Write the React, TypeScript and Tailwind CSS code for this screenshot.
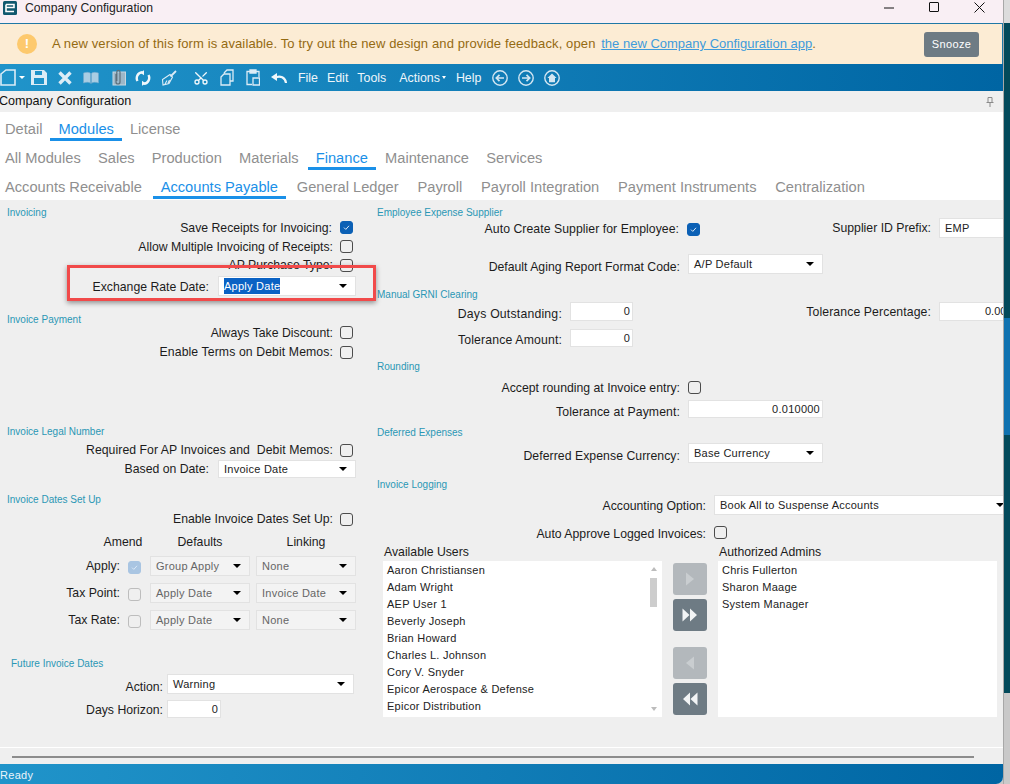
import type { ReactNode } from "react";
import { Scissors } from "lucide-react";

const users = [
  "Aaron Christiansen",
  "Adam Wright",
  "AEP User 1",
  "Beverly Joseph",
  "Brian Howard",
  "Charles L. Johnson",
  "Cory V. Snyder",
  "Epicor Aerospace & Defense",
  "Epicor Distribution",
];
const admins = ["Chris Fullerton", "Sharon Maage", "System Manager"];

function SectionTitle({ children, className = "" }: { children: ReactNode; className?: string }) {
  return <div className={`h-[12px] pt-[1px] text-[10px] leading-[12px] text-[#2a97b5] whitespace-nowrap ${className}`}>{children}</div>;
}

function Label({ children, className = "" }: { children: ReactNode; className?: string }) {
  return <div className={`shrink-0 text-right text-[12.25px] leading-[16px] text-[#1c1c1c] whitespace-nowrap ${className}`}>{children}</div>;
}

function Check({ checked, disabled, className = "" }: { checked?: boolean; disabled?: boolean; className?: string }) {
  const tone = checked
    ? disabled
      ? "bg-[#a9c5e2] border-[#a9c5e2]"
      : "bg-[#0b60b5] border-[#0b60b5]"
    : disabled
      ? "border-[#bdbdbd]"
      : "border-[#4c4c4c]";
  return (
    <div className={`flex h-[13px] w-[13px] shrink-0 items-center justify-center rounded-[3px] border ${tone} ${className}`}>
      {checked && (
        <svg width="9" height="9" viewBox="0 0 9 9" fill="none">
          <path d="M2 4.6 3.8 6.4 7 2.8" stroke="#dbe9f7" strokeWidth="1" />
        </svg>
      )}
    </div>
  );
}

function Select({
  value,
  disabled,
  selected,
  className = "",
}: {
  value: string;
  disabled?: boolean;
  selected?: boolean;
  className?: string;
}) {
  return (
    <div
      className={`flex shrink-0 items-center justify-between border border-[#e2e2e2] pl-[5px] pr-[8px] text-[11px] tracking-[0.25px] whitespace-nowrap ${
        disabled ? "bg-[#f3f3f3] text-[#666666]" : "bg-white text-[#222222]"
      } ${className}`}
    >
      {selected ? <span className="bg-[#0a62c4] text-white">{value}</span> : <span>{value}</span>}
      <div className="h-0 w-0 border-x-[4px] border-t-[4px] border-x-transparent border-t-black" />
    </div>
  );
}

function NumberBox({ value, className = "" }: { value: string; className?: string }) {
  return (
    <div className={`flex shrink-0 items-center justify-end border border-[#e2e2e2] bg-white pr-[2px] text-[11px] tracking-[0.25px] text-[#222222] ${className}`}>
      {value}
    </div>
  );
}

function Tabs({ items, active, className = "" }: { items: string[]; active: string; className?: string }) {
  return (
    <div className={`flex h-[29px] -ml-[3px] ${className}`}>
      {items.map((t) => (
        <div
          key={t}
          className={`h-[29px] whitespace-nowrap border-b-[3px] px-[8px] pt-[8px] text-[14.67px] leading-[18px] ${
            t === active ? "border-[#1a90e8] text-[#1a90e8]" : "border-transparent text-[#8f8f8f]"
          }`}
        >
          {t}
        </div>
      ))}
    </div>
  );
}

function MoveButton({ dim, className = "", dir, double }: { dim?: boolean; className?: string; dir: "left" | "right"; double?: boolean }) {
  const d = dir === "right" ? (double ? "M1.5 2.5l7 6.5-7 6.5zM9 2.5l7 6.5-7 6.5z" : "M5 2.5l8 6.5-8 6.5z") : double ? "M16.5 2.5l-7 6.5 7 6.5zM9 2.5L2 9l7 6.5z" : "M13 2.5L5 9l8 6.5z";
  return (
    <div className={`flex h-[32px] w-[34px] items-center justify-center rounded-[3px] ${dim ? "bg-[#b3b8bc]" : "bg-[#6e7b84]"} ${className}`}>
      <svg width="18" height="18" viewBox="0 0 18 18" fill={dim ? "#c9cdd0" : "#f2f4f5"}>
        <path d={d} />
      </svg>
    </div>
  );
}

function CircleIcon({ children, className = "" }: { children: ReactNode; className?: string }) {
  return (
    <svg width="16" height="16" viewBox="0 0 16 16" fill="none" stroke="#d3e6f2" strokeWidth="1.4" className={className}>
      <circle cx="8" cy="8" r="7.2" />
      {children}
    </svg>
  );
}

function Toolbar() {
  const c = "#dcecf6";
  return (
    <div className="flex h-[27px] items-center bg-gradient-to-r from-[#2094ca] to-[#0065a3] text-[12.4px] text-[#eef6fb]">
      <svg width="17" height="17" viewBox="0 0 17 17" fill="none" stroke={c} strokeWidth="1.6">
        <path d="M1 5 6 1h9v15H1z" />
      </svg>
      <div className="ml-[2px] h-0 w-0 border-x-[3px] border-t-[3px] border-x-transparent border-t-white" />
      <svg width="16" height="15" viewBox="0 0 16 15" className="ml-[6px]">
        <path fillRule="evenodd" fill={c} d="M0 0h13l3 3v12H0zM4 1v4h7V1zM3 8v6h10V8z" />
      </svg>
      <svg width="14" height="14" viewBox="0 0 14 14" stroke={c} strokeWidth="3.4" className="ml-[11px]">
        <path d="M1.5 1.5l11 11M12.5 1.5l-11 11" />
      </svg>
      <svg width="16" height="13" viewBox="0 0 16 13" className="ml-[11px]" fill="#a9cde3" stroke="#6fa8cc" strokeWidth="0.6">
        <path d="M0.5 2C3 1 6 1 7.6 2.4V12.4C6 11 3 11 0.5 12zM15.5 2C13 1 10 1 8.4 2.4V12.4C10 11 13 11 15.5 12z" />
      </svg>
      <svg width="16" height="17" viewBox="0 0 16 17" className="ml-[11px]" fill="none">
        <rect x="3" y="3" width="12.5" height="13" fill="#9db7c8" stroke="#c7d6df" />
        <path d="M6 5V13a2 2 0 0 0 4 0V3a1.6 1.6 0 0 0-3.2 0V12" stroke="#5d6f7b" strokeWidth="1.2" />
      </svg>
      <svg width="16" height="16" viewBox="0 0 16 16" fill="none" stroke="#f0f7fb" strokeWidth="2.4" className="ml-[9px]">
        <path d="M2.5 11A6 6 0 0 1 7 2.2M13.5 5A6 6 0 0 1 9 13.8" />
        <path d="M9 .2v5L5 2.4zM7 15.8v-5l4 2.8z" fill="#f0f7fb" stroke="none" />
      </svg>
      <svg width="16" height="16" viewBox="0 0 16 16" fill="none" stroke={c} strokeWidth="1.1" className="ml-[10px]">
        <path d="M15 1 9.5 6.5" strokeWidth="1.8" />
        <path d="M9 4.5 11.5 7 8 13.5 2 15 1.5 9.5zM4 14l2-3.5M7 13l1.5-3" />
      </svg>
      <Scissors size={16} color="#f0f7fb" strokeWidth={2} className="ml-[16px] -rotate-90" />
      <svg width="14" height="17" viewBox="0 0 14 17" fill="none" stroke={c} strokeWidth="1.3" className="ml-[11px]">
        <path d="M4 4 7 1h6v11h-3M1 8l3-3h6v11H1z" />
      </svg>
      <svg width="14" height="17" viewBox="0 0 14 17" fill="none" stroke={c} strokeWidth="1.3" className="ml-[12px]">
        <path d="M4 2.5H1v13h5M10 2.5h3V8" />
        <path d="M4 1h6v3H4z" fill={c} />
        <path d="M7 9h6.5v7H7z" />
      </svg>
      <svg width="16" height="11" viewBox="0 0 16 11" fill="none" stroke="#f0f7fb" strokeWidth="2.2" className="ml-[11px]">
        <path d="M15 11C14.5 6 9 2.5 4 6" />
        <path d="M0 5 6 1v8z" fill="#f0f7fb" stroke="none" />
      </svg>
      <span className="ml-[11px] pt-[2px]">File</span>
      <span className="ml-[9px] pt-[2px]">Edit</span>
      <span className="ml-[9px] pt-[2px]">Tools</span>
      <span className="ml-[13px] pt-[2px]">Actions</span>
      <div className="ml-[2px] h-0 w-0 border-x-[2.5px] border-t-[3px] border-x-transparent border-t-white" />
      <span className="ml-[10px] pt-[2px]">Help</span>
      <CircleIcon className="ml-[11px]">
        <path d="M12 8H4.5M7.5 4.8 4.3 8l3.2 3.2" strokeWidth="1.7" />
      </CircleIcon>
      <CircleIcon className="ml-[10px]">
        <path d="M4 8h7.5M8.5 4.8 11.7 8l-3.2 3.2" strokeWidth="1.7" />
      </CircleIcon>
      <CircleIcon className="ml-[10px]">
        <path d="M8 3.4 3.4 8H5v4.2h6V8h1.6z" fill="#d3e6f2" stroke="none" />
      </CircleIcon>
    </div>
  );
}

function LeftColumn() {
  return (
    <div className="relative w-[370px] shrink-0 pt-[6px]">
      <SectionTitle className="pl-[7px]">Invoicing</SectionTitle>
      <div className="mt-[2px] flex h-[16px] items-center">
        <Label className="w-[332px]">Save Receipts for Invoicing:</Label>
        <Check checked className="ml-[8px] -mt-[2px]" />
      </div>
      <div className="mt-[3px] flex h-[16px] items-center">
        <Label className="w-[333px]">Allow Multiple Invoicing of Receipts:</Label>
        <Check className="ml-[7px] -mt-[2px]" />
      </div>
      <div className="mt-[2px] flex h-[16px] items-center">
        <Label className="w-[333px]">AP Purchase Type:</Label>
        <Check className="ml-[7px]" />
      </div>
      <div className="mt-[3px] flex h-[20px] items-center">
        <Label className="w-[209px] pt-[1px]">Exchange Rate Date:</Label>
        <Select value="Apply Date" selected className="ml-[9px] h-[20px] w-[138px]" />
      </div>

      <SectionTitle className="mt-[17px] pl-[7px]">Invoice Payment</SectionTitle>
      <div className="flex h-[16px] items-center">
        <Label className="w-[333px]">Always Take Discount:</Label>
        <Check className="ml-[7px] -mt-[2px]" />
      </div>
      <div className="mt-[3px] flex h-[16px] items-center">
        <Label className="w-[333px] tracking-[0.1px]">Enable Terms on Debit Memos:</Label>
        <Check className="ml-[7px]" />
      </div>

      <SectionTitle className="mt-[65px] pl-[7px]">Invoice Legal Number</SectionTitle>
      <div className="mt-[5px] flex h-[16px] items-center">
        <Label className="w-[333px] tracking-[0.05px]">Required For AP Invoices and&nbsp; Debit Memos:</Label>
        <Check className="ml-[7px]" />
      </div>
      <div className="mt-[2px] flex h-[18px] items-center">
        <Label className="w-[209px]">Based on Date:</Label>
        <Select value="Invoice Date" className="ml-[9px] h-[18px] w-[138px]" />
      </div>

      <SectionTitle className="mt-[15px] pl-[7px]">Invoice Dates Set Up</SectionTitle>
      <div className="mt-[6px] flex h-[16px] items-center">
        <Label className="w-[333px]">Enable Invoice Dates Set Up:</Label>
        <Check className="ml-[7px]" />
      </div>
      <div className="mt-[7px] flex h-[16px] items-center text-center text-[12.25px] leading-[16px] text-[#1c1c1c]">
        <div className="ml-[100px] w-[46px]">Amend</div>
        <div className="ml-[29px] w-[50px]">Defaults</div>
        <div className="ml-[56px] w-[50px]">Linking</div>
      </div>
      <div className="mt-[6px] flex h-[20px] items-center">
        <Label className="w-[120px]">Apply:</Label>
        <Check checked disabled className="ml-[8px] mt-[2px]" />
        <Select disabled value="Group Apply" className="ml-[9px] h-[20px] w-[100px]" />
        <Select disabled value="None" className="ml-[6px] h-[20px] w-[100px]" />
      </div>
      <div className="mt-[7px] flex h-[20px] items-center">
        <Label className="w-[120px]">Tax Point:</Label>
        <Check disabled className="ml-[8px] mt-[2px]" />
        <Select disabled value="Apply Date" className="ml-[9px] h-[20px] w-[100px]" />
        <Select disabled value="Invoice Date" className="ml-[6px] h-[20px] w-[100px]" />
      </div>
      <div className="mt-[7px] flex h-[20px] items-center">
        <Label className="w-[120px]">Tax Rate:</Label>
        <Check disabled className="ml-[8px] mt-[2px]" />
        <Select disabled value="Apply Date" className="ml-[9px] h-[20px] w-[100px]" />
        <Select disabled value="None" className="ml-[6px] h-[20px] w-[100px]" />
      </div>

      <SectionTitle className="mt-[27px] pl-[11px]">Future Invoice Dates</SectionTitle>
      <div className="mt-[5px] flex h-[20px] items-center">
        <Label className="w-[163px] pt-[5px]">Action:</Label>
        <Select value="Warning" className="ml-[4px] h-[20px] w-[187px]" />
      </div>
      <div className="mt-[6px] flex h-[18px] items-center">
        <Label className="w-[163px] pt-[2px]">Days Horizon:</Label>
        <NumberBox value="0" className="ml-[4px] h-[18px] w-[54px]" />
      </div>

      {/* annotation drawn over the screenshot */}
      <div className="pointer-events-none absolute left-[67px] top-[65px] h-[36px] w-[309px] border-[3px] border-[#f14a4a] shadow-[0_2px_5px_rgba(0,0,0,0.4)]" />
    </div>
  );
}

function RightColumn() {
  return (
    <div className="min-w-0 flex-1 pt-[6px]">
      <SectionTitle className="pl-[7px]">Employee Expense Supplier</SectionTitle>
      <div className="flex h-[20px] items-center">
        <div className="mt-[2px] flex items-center">
          <Label className="w-[309px] tracking-[0.05px]">Auto Create Supplier for Employee:</Label>
          <Check checked className="ml-[8px]" />
        </div>
        <Label className="w-[231px]">Supplier ID Prefix:</Label>
        <div className="ml-[8px] flex h-[20px] w-[70px] shrink-0 items-center border border-[#e2e2e2] bg-white pl-[5px] text-[11px] tracking-[0.25px] text-[#222222]">EMP</div>
      </div>
      <div className="mt-[16px] flex h-[20px] items-center">
        <Label className="w-[310px] pt-[6px]">Default Aging Report Format Code:</Label>
        <Select value="A/P Default" className="ml-[8px] h-[20px] w-[135px]" />
      </div>

      <SectionTitle className="mt-[14px] pl-[7px]">Manual GRNI Clearing</SectionTitle>
      <div className="mt-[2px] flex h-[19px] items-center">
        <Label className="w-[192px] pt-[4px] tracking-[0.2px]">Days Outstanding:</Label>
        <NumberBox value="0" className="ml-[8px] h-[19px] w-[63px]" />
        <Label className="w-[298px] tracking-[0.1px]">Tolerance Percentage:</Label>
        <div className="ml-[8px] flex h-[19px] w-[70px] shrink-0 items-center border border-[#e2e2e2] bg-white pl-[45px] text-[11px] text-[#222222]">0.00</div>
      </div>
      <div className="mt-[8px] flex h-[18px] items-center">
        <Label className="w-[192px] pt-[4px] tracking-[0.15px]">Tolerance Amount:</Label>
        <NumberBox value="0" className="ml-[8px] h-[18px] w-[63px]" />
      </div>

      <SectionTitle className="mt-[13px] pl-[7px]">Rounding</SectionTitle>
      <div className="mt-[7px] flex h-[16px] items-center">
        <Label className="w-[310px] pt-[1px]">Accept rounding at Invoice entry:</Label>
        <Check className="ml-[8px]" />
      </div>
      <div className="mt-[5px] flex h-[18px] items-center">
        <Label className="w-[310px] pt-[5px] tracking-[0.1px]">Tolerance at Payment:</Label>
        <NumberBox value="0.010000" className="ml-[8px] h-[18px] w-[135px]" />
      </div>

      <SectionTitle className="mt-[8px] pl-[7px]">Deferred Expenses</SectionTitle>
      <div className="mt-[5px] flex h-[20px] items-center">
        <Label className="w-[310px] pt-[6px] tracking-[0.05px]">Deferred Expense Currency:</Label>
        <Select value="Base Currency" className="ml-[8px] h-[20px] w-[135px]" />
      </div>

      <SectionTitle className="mt-[15px] pl-[7px]">Invoice Logging</SectionTitle>
      <div className="mt-[5px] flex h-[20px] items-center">
        <Label className="w-[336px] pt-[2px]">Accounting Option:</Label>
        <Select value="Book All to Suspense Accounts" className="ml-[8px] h-[20px] w-[299px]" />
      </div>
      <div className="mt-[10px] flex h-[16px] items-center">
        <Label className="w-[336px] pt-[1px]">Auto Approve Logged Invoices:</Label>
        <Check className="ml-[8px] -mt-[2px]" />
      </div>

      <div className="mt-[4px] flex h-[14px] items-center pl-[14px] text-[12.25px] text-[#1c1c1c]">
        <div className="w-[335px]">Available Users</div>
        <div>Authorized Admins</div>
      </div>
      <div className="mt-[2px] ml-[13px] flex h-[156px]">
        <div className="relative h-[156px] w-[279px] bg-white pl-[4px] pt-[1px] text-[11px] leading-[17px] tracking-[0.25px] text-[#222222]">
          {users.map((u) => (
            <div key={u}>{u}</div>
          ))}
          <div className="absolute right-[5px] top-0 flex h-full w-[7px] flex-col items-center pt-[6px]">
            <div className="h-0 w-0 border-x-[3.5px] border-b-[4px] border-x-transparent border-b-[#bcbcbc]" />
            <div className="mt-[7px] h-[29px] w-[7px] bg-[#cdcdcd]" />
            <div className="mt-auto mb-[6px] h-0 w-0 border-x-[3.5px] border-t-[4px] border-x-transparent border-t-[#bcbcbc]" />
          </div>
        </div>
        <div className="ml-[11px] flex w-[34px] flex-col">
          <MoveButton dim dir="right" className="mt-[2px]" />
          <MoveButton double dir="right" className="mt-[4px]" />
          <MoveButton dim dir="left" className="mt-[16px]" />
          <MoveButton double dir="left" className="mt-[4px]" />
        </div>
        <div className="ml-[11px] h-[156px] w-[279px] bg-white pl-[4px] pt-[1px] text-[11px] leading-[17px] tracking-[0.25px] text-[#222222]">
          {admins.map((a) => (
            <div key={a}>{a}</div>
          ))}
        </div>
      </div>
    </div>
  );
}

export default function App() {
  return (
    <div className="flex h-[784px] w-[1010px] overflow-hidden bg-[#c9c9c9] font-['Liberation_Sans',Arial,sans-serif]">
      <div className="flex h-[784px] w-[1003px] shrink-0 flex-col overflow-hidden rounded-br-[7px] bg-[#efefef]">
        {/* title bar */}
        <div className="flex h-[24px] shrink-0 items-start border-b border-[#1f78a6] bg-[#f9eff4]">
          <svg width="14" height="14" viewBox="0 0 14 14" className="ml-[3px] mt-[1px]" fill="none">
            <rect width="14" height="14" rx="1.5" fill="#10596f" />
            <path d="M3 3.5h8v3H3M3 3.5v7h8" stroke="#ffffff" strokeWidth="1.6" />
          </svg>
          <span className="ml-[8px] text-[12.2px] leading-[16px] text-[#222222]">Company Configuration</span>
          <svg width="10" height="2" viewBox="0 0 10 2" className="ml-[731px] mt-[6.5px]">
            <path d="M0 1h10" stroke="#111111" />
          </svg>
          <div className="ml-[35px] mt-[2px] h-[10px] w-[10px] rounded-[1px] border border-[#111111]" />
          <svg width="11" height="11" viewBox="0 0 11 11" className="ml-[35px] mt-[2px]">
            <path d="M.5.5l10 10M10.5.5l-10 10" stroke="#111111" />
          </svg>
        </div>

        {/* update banner */}
        <div className="flex h-[40px] shrink-0 items-center border-r border-[#1f78a6] bg-[#fcecd4]">
          <div className="ml-[17px] flex h-[20px] w-[20px] items-center justify-center rounded-full bg-[#fdc96d] text-[13px] font-bold text-white">!</div>
          <div className="ml-[15px] text-[13px] tracking-[0.12px] text-[#946a12] whitespace-nowrap">
            A new version of this form is available. To try out the new design and provide feedback, open{" "}
            <span className="ml-[2px] tracking-normal text-[#3f9bdb] underline">the new Company Configuration app</span>.
          </div>
          <div className="ml-auto mr-[23px] flex h-[25px] w-[55px] items-center justify-center rounded-[3px] bg-[#6e7b84] text-[11px] tracking-[0.4px] text-white">Snooze</div>
        </div>

        <Toolbar />

        {/* form caption */}
        <div className="flex h-[21px] shrink-0 items-center justify-between pr-[9px]">
          <span className="-ml-[1px] text-[12.6px] text-[#111111]">Company Configuration</span>
          <svg width="8" height="10" viewBox="0 0 8 10" fill="none" stroke="#8a8a8a">
            <path d="M2 .5h4v5H2zM.5 5.5h7M4 5.5V10" />
          </svg>
        </div>

        {/* nested tabs */}
        <div className="h-[88px] shrink-0 overflow-hidden bg-white">
          <Tabs items={["Detail", "Modules", "License"]} active="Modules" />
          <Tabs items={["All Modules", "Sales", "Production", "Materials", "Finance", "Maintenance", "Services"]} active="Finance" className="gap-[1.2px]" />
          <Tabs
            items={["Accounts Receivable", "Accounts Payable", "General Ledger", "Payroll", "Payroll Integration", "Payment Instruments", "Centralization"]}
            active="Accounts Payable"
            className="gap-[2.8px]"
          />
        </div>

        {/* form body */}
        <div className="flex h-[547px] shrink-0 overflow-hidden">
          <LeftColumn />
          <RightColumn />
        </div>

        {/* horizontal scroll */}
        <div className="h-[17px] shrink-0 border-t border-white pl-[12px] pt-[8px]">
          <div className="h-[2px] w-[962px] bg-[#8c8c8c]" />
        </div>

        {/* status bar */}
        <div className="flex h-[20px] shrink-0 items-center bg-gradient-to-r from-[#2094ca] to-[#0065a3] pt-[2px] text-[11px] tracking-[0.3px] text-[#eaf4fa]">Ready</div>
      </div>

      {/* desktop behind the window */}
      <div className="flex w-[7px] shrink-0 flex-col border-l border-[#a8a8a8]">
        <div className="h-[23px] bg-[#dcdcdc]" />
        <div className="h-[295px] bg-[#034a5b]" />
        <div className="h-[117px] bg-[#0f72b0]" />
        <div className="h-[258px] bg-[#034a5b]" />
        <div className="flex-1 bg-[#c9c9c9]" />
      </div>
    </div>
  );
}
